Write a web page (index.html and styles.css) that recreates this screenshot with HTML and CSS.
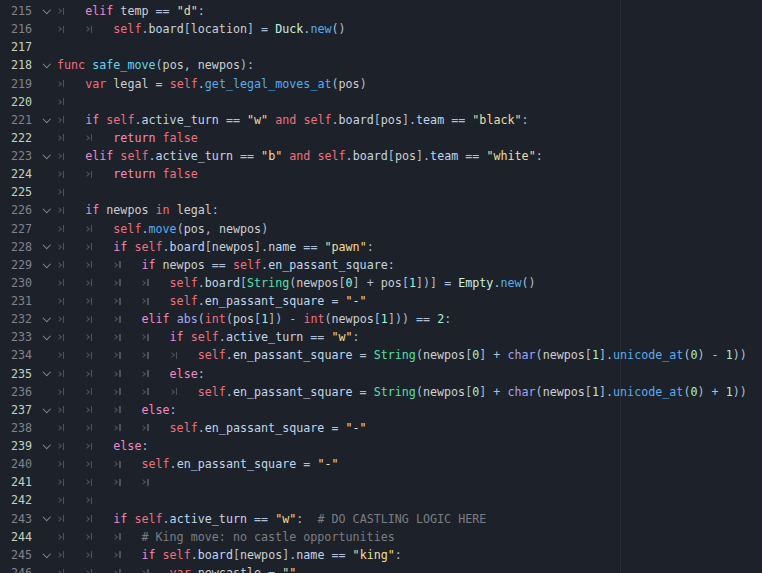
FILE: index.html
```html
<!DOCTYPE html>
<html>
<head>
<meta charset="utf-8">
<link rel="stylesheet" href="styles.css">
</head>
<body>
<div class="editor">
<div class="row"><span class="ln">215</span><span class="fold on"></span><span class="code"><span class="t"></span><span class="c">elif</span> <span class="v">temp</span> == <span class="s">"d"</span>:</span></div>
<div class="row"><span class="ln">216</span><span class="fold"></span><span class="code"><span class="t"></span><span class="t"></span><span class="k">self</span>.<span class="m">board</span>[<span class="v">location</span>] = <span class="u">Duck</span>.<span class="f">new</span>()</span></div>
<div class="row"><span class="ln safe">217</span><span class="fold"></span><span class="code"></span></div>
<div class="row"><span class="ln safe">218</span><span class="fold on"></span><span class="code"><span class="k">func</span> <span class="d">safe_move</span>(<span class="v">pos</span>, <span class="v">newpos</span>):</span></div>
<div class="row"><span class="ln">219</span><span class="fold"></span><span class="code"><span class="t"></span><span class="k">var</span> <span class="v">legal</span> = <span class="k">self</span>.<span class="f">get_legal_moves_at</span>(<span class="v">pos</span>)</span></div>
<div class="row"><span class="ln safe">220</span><span class="fold"></span><span class="code"><span class="t"></span></span></div>
<div class="row"><span class="ln">221</span><span class="fold on"></span><span class="code"><span class="t"></span><span class="c">if</span> <span class="k">self</span>.<span class="m">active_turn</span> == <span class="s">"w"</span> <span class="k">and</span> <span class="k">self</span>.<span class="m">board</span>[<span class="v">pos</span>].<span class="m">team</span> == <span class="s">"black"</span>:</span></div>
<div class="row"><span class="ln safe">222</span><span class="fold"></span><span class="code"><span class="t"></span><span class="t"></span><span class="c">return</span> <span class="k">false</span></span></div>
<div class="row"><span class="ln">223</span><span class="fold on"></span><span class="code"><span class="t"></span><span class="c">elif</span> <span class="k">self</span>.<span class="m">active_turn</span> == <span class="s">"b"</span> <span class="k">and</span> <span class="k">self</span>.<span class="m">board</span>[<span class="v">pos</span>].<span class="m">team</span> == <span class="s">"white"</span>:</span></div>
<div class="row"><span class="ln safe">224</span><span class="fold"></span><span class="code"><span class="t"></span><span class="t"></span><span class="c">return</span> <span class="k">false</span></span></div>
<div class="row"><span class="ln safe">225</span><span class="fold"></span><span class="code"><span class="t"></span></span></div>
<div class="row"><span class="ln">226</span><span class="fold on"></span><span class="code"><span class="t"></span><span class="c">if</span> <span class="v">newpos</span> <span class="k">in</span> <span class="v">legal</span>:</span></div>
<div class="row"><span class="ln">227</span><span class="fold"></span><span class="code"><span class="t"></span><span class="t"></span><span class="k">self</span>.<span class="f">move</span>(<span class="v">pos</span>, <span class="v">newpos</span>)</span></div>
<div class="row"><span class="ln">228</span><span class="fold on"></span><span class="code"><span class="t"></span><span class="t"></span><span class="c">if</span> <span class="k">self</span>.<span class="m">board</span>[<span class="v">newpos</span>].<span class="m">name</span> == <span class="s">"pawn"</span>:</span></div>
<div class="row"><span class="ln">229</span><span class="fold on"></span><span class="code"><span class="t"></span><span class="t"></span><span class="t"></span><span class="c">if</span> <span class="v">newpos</span> == <span class="k">self</span>.<span class="m">en_passant_square</span>:</span></div>
<div class="row"><span class="ln">230</span><span class="fold"></span><span class="code"><span class="t"></span><span class="t"></span><span class="t"></span><span class="t"></span><span class="k">self</span>.<span class="m">board</span>[<span class="b">String</span>(<span class="v">newpos</span>[<span class="n">0</span>] + <span class="v">pos</span>[<span class="n">1</span>])] = <span class="u">Empty</span>.<span class="f">new</span>()</span></div>
<div class="row"><span class="ln">231</span><span class="fold"></span><span class="code"><span class="t"></span><span class="t"></span><span class="t"></span><span class="t"></span><span class="k">self</span>.<span class="m">en_passant_square</span> = <span class="s">"-"</span></span></div>
<div class="row"><span class="ln">232</span><span class="fold on"></span><span class="code"><span class="t"></span><span class="t"></span><span class="t"></span><span class="c">elif</span> <span class="g">abs</span>(<span class="k">int</span>(<span class="v">pos</span>[<span class="n">1</span>]) - <span class="k">int</span>(<span class="v">newpos</span>[<span class="n">1</span>])) == <span class="n">2</span>:</span></div>
<div class="row"><span class="ln">233</span><span class="fold on"></span><span class="code"><span class="t"></span><span class="t"></span><span class="t"></span><span class="t"></span><span class="c">if</span> <span class="k">self</span>.<span class="m">active_turn</span> == <span class="s">"w"</span>:</span></div>
<div class="row"><span class="ln">234</span><span class="fold"></span><span class="code"><span class="t"></span><span class="t"></span><span class="t"></span><span class="t"></span><span class="t"></span><span class="k">self</span>.<span class="m">en_passant_square</span> = <span class="b">String</span>(<span class="v">newpos</span>[<span class="n">0</span>] + <span class="g">char</span>(<span class="v">newpos</span>[<span class="n">1</span>].<span class="f">unicode_at</span>(<span class="n">0</span>) - <span class="n">1</span>))</span></div>
<div class="row"><span class="ln safe">235</span><span class="fold on"></span><span class="code"><span class="t"></span><span class="t"></span><span class="t"></span><span class="t"></span><span class="c">else</span>:</span></div>
<div class="row"><span class="ln">236</span><span class="fold"></span><span class="code"><span class="t"></span><span class="t"></span><span class="t"></span><span class="t"></span><span class="t"></span><span class="k">self</span>.<span class="m">en_passant_square</span> = <span class="b">String</span>(<span class="v">newpos</span>[<span class="n">0</span>] + <span class="g">char</span>(<span class="v">newpos</span>[<span class="n">1</span>].<span class="f">unicode_at</span>(<span class="n">0</span>) + <span class="n">1</span>))</span></div>
<div class="row"><span class="ln safe">237</span><span class="fold on"></span><span class="code"><span class="t"></span><span class="t"></span><span class="t"></span><span class="c">else</span>:</span></div>
<div class="row"><span class="ln">238</span><span class="fold"></span><span class="code"><span class="t"></span><span class="t"></span><span class="t"></span><span class="t"></span><span class="k">self</span>.<span class="m">en_passant_square</span> = <span class="s">"-"</span></span></div>
<div class="row"><span class="ln safe">239</span><span class="fold on"></span><span class="code"><span class="t"></span><span class="t"></span><span class="c">else</span>:</span></div>
<div class="row"><span class="ln">240</span><span class="fold"></span><span class="code"><span class="t"></span><span class="t"></span><span class="t"></span><span class="k">self</span>.<span class="m">en_passant_square</span> = <span class="s">"-"</span></span></div>
<div class="row"><span class="ln safe">241</span><span class="fold"></span><span class="code"><span class="t"></span><span class="t"></span><span class="t"></span><span class="t"></span></span></div>
<div class="row"><span class="ln safe">242</span><span class="fold"></span><span class="code"><span class="t"></span><span class="t"></span></span></div>
<div class="row"><span class="ln">243</span><span class="fold on"></span><span class="code"><span class="t"></span><span class="t"></span><span class="c">if</span> <span class="k">self</span>.<span class="m">active_turn</span> == <span class="s">"w"</span>:  <span class="cm"># DO CASTLING LOGIC HERE</span></span></div>
<div class="row"><span class="ln safe">244</span><span class="fold"></span><span class="code"><span class="t"></span><span class="t"></span><span class="t"></span><span class="cm"># King move: no castle opportunities</span></span></div>
<div class="row"><span class="ln">245</span><span class="fold on"></span><span class="code"><span class="t"></span><span class="t"></span><span class="t"></span><span class="c">if</span> <span class="k">self</span>.<span class="m">board</span>[<span class="v">newpos</span>].<span class="m">name</span> == <span class="s">"king"</span>:</span></div>
<div class="row"><span class="ln">246</span><span class="fold"></span><span class="code"><span class="t"></span><span class="t"></span><span class="t"></span><span class="t"></span><span class="k">var</span> <span class="v">newcastle</span> = <span class="s">""</span></span></div>
</div>
</body>
</html>
```

FILE: styles.css
```css
html, body {
  margin: 0;
  padding: 0;
  background: #1d2129;
  overflow: hidden;
}

.editor {
  height: 573px;
  padding-top: 2px;
  box-sizing: border-box;
  background-color: #1d2129;
  background-image: linear-gradient(to right, transparent 620px, #282c34 620px, #282c34 621px, transparent 621px);
  font-family: "DejaVu Sans Mono", "Liberation Mono", monospace;
  font-size: 11.7px;
  color: #abc0dc;
}

.row {
  display: flex;
  align-items: center;
  height: 18.13px;
  line-height: 18.13px;
  white-space: pre;
}

.ln {
  width: 32px;
  text-align: right;
  color: #7f848b;
  flex: none;
}

.ln.safe {
  color: #c0d3bf;
}

.fold {
  width: 25px;
  flex: none;
  display: flex;
  align-items: center;
  height: 100%;
}

.fold.on::before {
  content: "";
  width: 4.5px;
  height: 4.5px;
  border-right: 1.6px solid #8a8f96;
  border-bottom: 1.6px solid #8a8f96;
  transform: rotate(45deg);
  margin-left: 12px;
  margin-top: -3px;
}

.code {
  display: block;
  height: 100%;
  white-space: pre;
}

.t {
  display: inline-flex;
  align-items: center;
  vertical-align: top;
  width: 4ch;
  height: 18.13px;
}

.t::before {
  content: "";
  width: 3px;
  height: 3px;
  border-top: 1.3px solid #4e535b;
  border-right: 1.3px solid #4e535b;
  transform: rotate(45deg);
}

.t::after {
  content: "";
  width: 1.3px;
  height: 7px;
  background: #4e535b;
  margin-left: 2px;
}

.v { color: #cdcfd2; }
.k { color: #f0707f; }
.c { color: #f08bc6; }
.f { color: #57adf0; }
.d { color: #62d6f0; }
.m { color: #c0d6ec; }
.s { color: #efdf9e; }
.n { color: #a1f0d6; }
.b { color: #50e0aa; }
.u { color: #c7f0e2; }
.g { color: #a8a3f0; }
.cm { color: #7a7e84; }
```
